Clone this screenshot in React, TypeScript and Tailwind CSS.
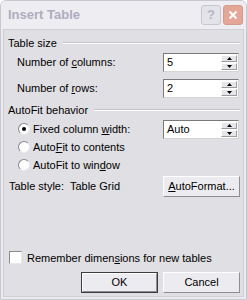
import React from 'react';

const font = { fontFamily: '"Liberation Sans", Arial, sans-serif' };

function U({ children }: { children: React.ReactNode }) {
  return <span className="underline underline-offset-[1px]">{children}</span>;
}

function GroupTitle({ label }: { label: string }) {
  return (
    <div className="flex items-center gap-[6px] h-[14px]">
      <span className="text-[#000]">{label}</span>
      <div className="flex-1 border-t border-[#c5c5c9] border-b border-b-white" />
    </div>
  );
}

function SpinBox({ value }: { value: string }) {
  return (
    <div className="flex w-[76px] h-[19px] bg-white border border-t-[#7a7a7a] border-l-[#7a7a7a] border-r-[#d4d4d4] border-b-[#d4d4d4]">
      <div className="flex-1 pl-[3px] leading-[17px] text-black">{value}</div>
      <div className="flex flex-col w-[17px] pt-[1px] pr-[1px] pb-[1px] gap-[1px]">
        <SpinBtn up />
        <SpinBtn />
      </div>
    </div>
  );
}

function SpinBtn({ up }: { up?: boolean }) {
  return (
    <div className="flex-1 flex items-center justify-center bg-[#e7e6ea] border border-t-white border-l-white border-r-[#9b9ba0] border-b-[#9b9ba0]">
      <svg width="5" height="3" viewBox="0 0 5 3">
        {up ? <path d="M2.5 0 L5 3 L0 3 Z" fill="#000" /> : <path d="M0 0 L5 0 L2.5 3 Z" fill="#000" />}
      </svg>
    </div>
  );
}

function Radio({ checked }: { checked?: boolean }) {
  return (
    <div className="w-[12px] h-[12px] rounded-full bg-white border border-t-[#8a8a8e] border-l-[#8a8a8e] border-r-[#e8e8ea] border-b-[#e8e8ea] flex items-center justify-center">
      {checked && <div className="w-[4px] h-[4px] rounded-full bg-black" />}
    </div>
  );
}

function Btn({ children, def }: { children: React.ReactNode; def?: boolean }) {
  return (
    <div className={`w-[77px] h-[21px] ${def ? 'border border-[#3c3c3c]' : ''}`}>
      <div className="w-full h-full flex items-center justify-center bg-[#ecebef] border border-t-white border-l-white border-r-[#8d8d92] border-b-[#8d8d92] text-black">
        {children}
      </div>
    </div>
  );
}

export default function App() {
  return (
    <div className="w-[247px] h-[300px] bg-white text-[11px]" style={font}>
      <div className="w-full h-full flex flex-col rounded-t-[6px] border border-[#c9c8d0] bg-[#eceaf0] overflow-hidden">
        {/* title bar */}
        <div className="h-[28px] flex items-center pl-[7px] pr-[3px] bg-[#eeedf2]">
          <span className="flex-1 text-[13px] font-bold text-[#aeacbd]">Insert Table</span>
          <div className="flex gap-[2px]">
            <div className="w-[20px] h-[20px] rounded-[3px] bg-[#e3e3ea] border border-[#c7c6d0] flex items-center justify-center text-[#b5b4c4] text-[13px] font-bold">?</div>
            <div className="w-[20px] h-[20px] rounded-[3px] bg-[#e4a797] border border-[#d49a8c] flex items-center justify-center">
              <svg width="10" height="10" viewBox="0 0 10 10">
                <path d="M1.5 1.5 L8.5 8.5 M8.5 1.5 L1.5 8.5" stroke="#fff" strokeWidth="2" />
              </svg>
            </div>
          </div>
        </div>
        {/* client */}
        <div className="flex-1 mx-[2px] mb-[2px] bg-[#e0dfe3] border border-[#d0cfd4] pl-[4px] pr-[3px] pt-[6px] flex flex-col">
          <GroupTitle label="Table size" />
          <div className="pl-[9px] pr-[1px] pt-[3px] flex flex-col gap-[7px]">
            <div className="flex items-center justify-between">
              <span>Number of <U>c</U>olumns:</span>
              <SpinBox value="5" />
            </div>
            <div className="flex items-center justify-between">
              <span>Number of <U>r</U>ows:</span>
              <SpinBox value="2" />
            </div>
          </div>
          <div className="pt-[5px]">
            <GroupTitle label="AutoFit behavior" />
          </div>
          <div className="pl-[10px] pr-[1px] pt-[3px] flex flex-col">
            <div className="flex items-center justify-between h-[18px]">
              <div className="flex items-center gap-[3px]">
                <Radio checked />
                <span>Fixed column <U>w</U>idth:</span>
              </div>
              <SpinBox value="Auto" />
            </div>
            <div className="flex items-center gap-[3px] h-[18px]">
              <Radio />
              <span>Auto<U>F</U>it to contents</span>
            </div>
            <div className="flex items-center gap-[3px] h-[18px]">
              <Radio />
              <span>AutoFit to win<U>d</U>ow</span>
            </div>
          </div>
          <div className="flex items-center justify-between pt-[2px]">
            <span className="pl-[1px]">Table style:&nbsp; Table Grid</span>
            <Btn>
              <span><U>A</U>utoFormat...</span>
            </Btn>
          </div>
          <div className="flex-1" />
          <div className="flex items-center gap-[5px] pl-[1px]">
            <div className="w-[13px] h-[13px] bg-white border border-t-[#8a8a8e] border-l-[#8a8a8e] border-r-[#e8e8ea] border-b-[#e8e8ea]" />
            <span>Remember dimen<U>s</U>ions for new tables</span>
          </div>
          <div className="flex justify-end gap-[5px] pt-[6px] pb-[3px]">
            <Btn def>OK</Btn>
            <Btn>Cancel</Btn>
          </div>
        </div>
      </div>
    </div>
  );
}
